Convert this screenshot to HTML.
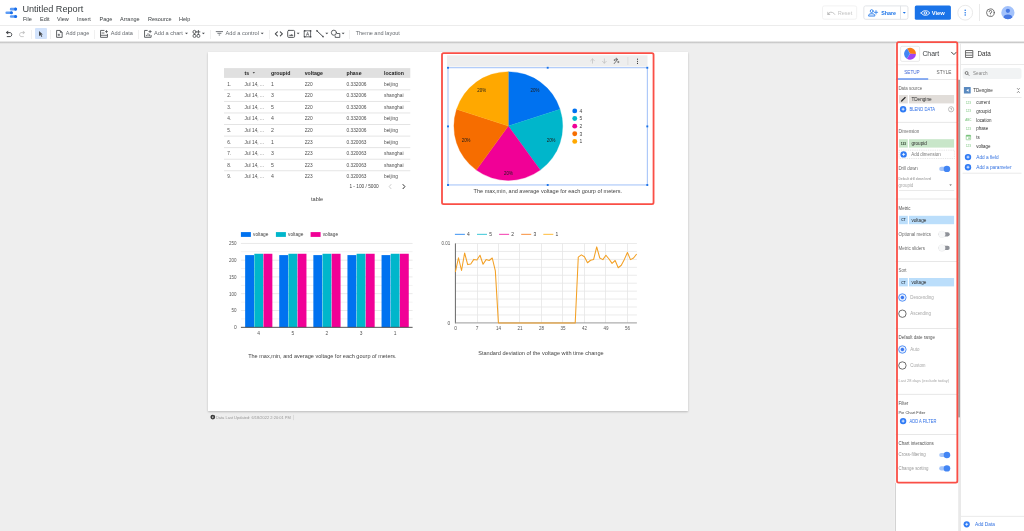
<!DOCTYPE html>
<html lang="en">
<head>
<meta charset="utf-8">
<title>Untitled Report</title>
<style>
*{box-sizing:border-box;margin:0;padding:0}
html,body{width:1024px;height:531px;overflow:hidden;background:#eeeeee;font-family:"Liberation Sans",sans-serif;color:#3c4043}
.a{position:absolute;white-space:nowrap;line-height:1}
.ov{left:0;top:0;pointer-events:none;will-change:transform}
svg text{font-family:"Liberation Sans",sans-serif}
#hdr{left:0;top:0;width:1024px;height:26px;background:#fff;border-bottom:1px solid #ececec}
#tb{left:0;top:26px;width:1024px;height:15.5px;background:#fff}
#tbsh{left:0;top:40.8px;width:1024px;height:2.9px;background:linear-gradient(#ffffff,#d2d2d2 30%,#c6c6c6 45%,#dcdcdc 70%,#eeeeee)}
.sep{top:29.5px;width:1px;height:9.3px;background:#f0f0f0}
#canvas{left:208px;top:52px;width:480px;height:359px;background:#fff;box-shadow:0 1px 2px rgba(0,0,0,.22)}
</style>
</head>
<body>
<!-- HEADER -->
<div class="a" id="hdr"></div>
<div class="a" id="tb"></div>
<div class="a" id="tbsh"></div>

<!-- CANVAS -->
<div class="a" id="canvas"></div>

<!-- toolbar separators -->
<div class="a sep" style="left:31px"></div>
<div class="a sep" style="left:49.5px"></div>
<div class="a sep" style="left:94.3px"></div>
<div class="a sep" style="left:138.3px"></div>
<div class="a sep" style="left:209.5px"></div>
<div class="a sep" style="left:269px"></div>
<div class="a sep" style="left:349.3px"></div>
<div class="a" style="left:35px;top:28px;width:11.8px;height:11.3px;background:#d2e3fc;border-radius:1px"></div>
<svg class="a" style="left:0;top:0" width="1024" height="44" viewBox="0 0 1024 44" fill="none" stroke-linecap="round" stroke-linejoin="round">
 <!-- logo -->
 <g stroke="#5c9bf5" stroke-width="2.6"><path d="M11.1 9.15H15.5M6.7 12.8H11.3M11.1 16.5H15.5"/></g>
 <g fill="#1a6ee8"><circle cx="15.6" cy="9.1" r="1.55"/><circle cx="11.4" cy="12.8" r="1.55"/><circle cx="15.6" cy="16.5" r="1.55"/></g>
 <!-- undo -->
 <g stroke="#46494d" stroke-width="1">
  <path d="M7 32.6H10.3A2.1 2.1 0 0 1 10.3 36.6H7.2"/>
 </g>
 <path d="M5.8 32.6L8.2 30.6V34.6Z" fill="#46494d"/>
 <!-- redo -->
 <g stroke="#c6c6c6" stroke-width="0.9">
  <path d="M23.8 32.6H21A2.1 2.1 0 0 0 21 36.6H23.4"/>
 </g>
 <path d="M25.2 32.6L22.9 30.7V34.5Z" fill="#c6c6c6"/>
 <!-- cursor -->
 <path d="M39 31L42.9 34.6H41.2L42.3 36.6L41.5 37L40.4 35L39 36.3Z" fill="#46494d"/>
 <!-- add page -->
 <g stroke="#46494d" stroke-width="0.85" stroke-linecap="butt" stroke-linejoin="miter">
  <path d="M56.6 30.45H60.1L62.15 32.5V37.35H56.6Z"/>
  <path d="M60.1 30.45V32.5H62.15Z" fill="#46494d" stroke-width="0.3"/>
  <path d="M58.9 33.7V36.1M57.7 34.9H60.1" stroke-width="0.75"/>
 </g>
 <!-- add data -->
 <g stroke="#46494d" stroke-width="0.85" stroke-linecap="butt" stroke-linejoin="miter">
  <path d="M104.4 30.45H100.55V37.35H107.45V33.9"/>
  <path d="M100.55 35.3H107.45M101.6 33H104.4" stroke-width="0.8"/>
  <path d="M106.5 30.1V33.1M105 31.6H108" stroke-width="0.75"/>
 </g>
 <!-- add chart -->
 <g stroke="#46494d" stroke-width="0.85" stroke-linecap="butt" stroke-linejoin="miter">
  <path d="M147.6 30.45H144.55V37.3H151.1V35"/>
  <path d="M146.4 34.9V36.2M148 33.3V36.2M149.6 34.3V36.2" stroke-width="0.8"/>
  <path d="M150.1 30V33.1M148.55 31.55H151.65" stroke-width="0.75"/>
 </g>
 <!-- community -->
 <g stroke="#46494d" stroke-width="0.85">
  <circle cx="194.5" cy="31.9" r="1.55"/>
  <rect x="193.1" y="34.4" width="2.8" height="3" rx="1.2"/>
  <rect x="197" y="34.4" width="2.8" height="3" rx="1.2"/>
  <path d="M198.4 30.4V33.4M196.9 31.9H199.9"/>
 </g>
 <!-- carets -->
 <g fill="#46494d">
  <path d="M185.0 32.65H188.0L186.5 34.25Z"/>
  <path d="M201.9 32.65H204.9L203.4 34.25Z"/>
  <path d="M260.7 32.65H263.7L262.2 34.25Z"/>
  <path d="M296.6 32.65H299.6L298.1 34.25Z"/>
  <path d="M325.3 32.65H328.3L326.8 34.25Z"/>
  <path d="M341.6 32.65H344.6L343.1 34.25Z"/>
 </g>
 <!-- filter -->
 <g stroke="#74787c" stroke-width="1" stroke-linecap="butt">
  <path d="M215.8 31.6H223M217.4 33.3H221.4M218.7 35H220.1"/>
 </g>
 <!-- code -->
 <g stroke="#46494d" stroke-width="1.05">
  <path d="M277.4 31.9L275.3 33.9L277.4 35.9M280.3 31.9L282.4 33.9L280.3 35.9"/>
 </g>
 <!-- image -->
 <g stroke="#46494d" stroke-width="0.9">
  <rect x="287.7" y="30.4" width="6.9" height="7" rx="1.1"/>
  <path d="M289.3 35.7H293.1L291.9 34.3L290.8 35.3L290.2 34.9Z" fill="#46494d" stroke-width="0.4"/>
 </g>
 <!-- text box -->
 <g stroke="#46494d" stroke-width="0.8">
  <rect x="304.6" y="30.8" width="6" height="6"/>
  <path d="M306.5 35.4L307.6 32.3L308.7 35.4M306.9 34.4H308.3" stroke-width="0.55"/>
 </g>
 <g fill="#46494d"><rect x="303.9" y="30.1" width="1.5" height="1.5"/><rect x="309.8" y="30.1" width="1.5" height="1.5"/><rect x="303.9" y="36" width="1.5" height="1.5"/><rect x="309.8" y="36" width="1.5" height="1.5"/></g>
 <!-- line -->
 <path d="M317 30.9L323 36.6" stroke="#46494d" stroke-width="1"/>
 <circle cx="317" cy="30.9" r="0.8" fill="#46494d"/><circle cx="323" cy="36.6" r="0.8" fill="#46494d"/>
 <!-- shapes -->
 <g stroke="#46494d" stroke-width="0.85">
  <circle cx="333.9" cy="32.7" r="2.55"/>
  <path d="M337.3 33.5H339.8V37.4H335.2V36"/>
 </g>
</svg>

<svg class="a" style="left:816px;top:0" width="208" height="26" viewBox="816 0 208 26" fill="none">
 <rect x="822.5" y="5.9" width="34.2" height="13.3" rx="1.8" stroke="#f0f0f0" stroke-width="0.9"/>
 <rect x="863.85" y="5.9" width="44.1" height="13.4" rx="1.8" stroke="#dfe1e5" stroke-width="0.9"/>
 <rect x="900.1" y="5.9" width="0.9" height="13.4" fill="#dfe1e5"/>
 <rect x="914.8" y="5.4" width="36.1" height="14.4" rx="1.6" fill="#1a73e8"/>
 <circle cx="965.2" cy="12.7" r="7.4" stroke="#e6e6e6" stroke-width="0.9"/>
 <rect x="979" y="4" width="0.9" height="17" fill="#e8e8e8"/>
</svg>
<svg class="a" style="left:816px;top:0" width="208" height="26" viewBox="816 0 208 26" fill="none" stroke-linecap="round" stroke-linejoin="round">
 <!-- reset icon -->
 <path d="M828.3 14.4L829.2 12.6A4.2 4.2 0 0 1 834.8 14.4" stroke="#bdbdbd" stroke-width="0.9"/>
 <path d="M827.3 11.6V14.9H830.6Z" fill="#bdbdbd"/>
 <!-- share icon -->
 <g stroke="#1a73e8" stroke-width="0.8" fill="none">
  <circle cx="871.7" cy="11.1" r="1.45"/>
  <path d="M868.6 15.7V15.2C868.6 14.1 870.6 13.6 871.7 13.6C872.8 13.6 874.8 14.1 874.8 15.2V15.7Z" fill="#d2e3fc"/>
  <path d="M876 10.6V14M874.3 12.3H877.7" stroke-width="0.75"/>
 </g>
 <path d="M902.8 12.1H905.8L904.3 13.7Z" fill="#1a73e8"/>
 <!-- eye -->
 <g stroke="#fff" stroke-width="0.85">
  <path d="M921.2 13C922.3 11.3 923.7 10.7 925.4 10.7C927.1 10.7 928.6 11.3 929.7 13C928.6 14.7 927.1 15.3 925.4 15.3C923.7 15.3 922.3 14.7 921.2 13Z"/>
  <circle cx="925.4" cy="13" r="1.25"/>
 </g>
 <!-- kebab -->
 <g fill="#1a73e8"><circle cx="965.2" cy="10.3" r="0.75"/><circle cx="965.2" cy="12.7" r="0.75"/><circle cx="965.2" cy="15.1" r="0.75"/></g>
 <!-- avatar -->
 <defs><clipPath id="avc"><circle cx="1007.9" cy="12.7" r="6.6"/></clipPath></defs>
 <circle cx="1007.9" cy="12.7" r="6.6" fill="#a3c2fb"/>
 <g clip-path="url(#avc)" fill="#4879e3"><circle cx="1007.9" cy="10.8" r="2.15"/><ellipse cx="1007.9" cy="17.3" rx="4.2" ry="2.7"/></g>
 <!-- help -->
 <circle cx="990.4" cy="12.7" r="3.85" stroke="#4a4a4a" stroke-width="0.75"/>
 <path d="M989.1 11.8A1.3 1.3 0 1 1 990.4 13V13.6" stroke="#444" stroke-width="0.75"/>
 <circle cx="990.4" cy="15" r="0.45" fill="#444"/>
</svg>

<!-- HEADER TEXT -->
<svg class="a ov" width="1024" height="531" viewBox="0 0 1024 531">
<text x="22.40" y="12.40" font-size="9.15" fill="#3c4043">Untitled Report</text>
<text x="23.00" y="21.40" font-size="5.78" fill="#3c4043" textLength="8.86" lengthAdjust="spacingAndGlyphs">File</text>
<text x="40.00" y="21.40" font-size="5.78" fill="#3c4043" textLength="9.48" lengthAdjust="spacingAndGlyphs">Edit</text>
<text x="57.00" y="21.40" font-size="5.78" fill="#3c4043" textLength="11.82" lengthAdjust="spacingAndGlyphs">View</text>
<text x="77.00" y="21.40" font-size="5.78" fill="#3c4043" textLength="13.76" lengthAdjust="spacingAndGlyphs">Insert</text>
<text x="99.50" y="21.40" font-size="5.78" fill="#3c4043" textLength="12.85" lengthAdjust="spacingAndGlyphs">Page</text>
<text x="120.00" y="21.40" font-size="5.78" fill="#3c4043" textLength="19.57" lengthAdjust="spacingAndGlyphs">Arrange</text>
<text x="148.00" y="21.40" font-size="5.78" fill="#3c4043" textLength="23.54" lengthAdjust="spacingAndGlyphs">Resource</text>
<text x="179.00" y="21.40" font-size="5.78" fill="#3c4043" textLength="11.31" lengthAdjust="spacingAndGlyphs">Help</text>
<text x="65.80" y="35.40" font-size="5.78" fill="#676b70" textLength="23.55" lengthAdjust="spacingAndGlyphs">Add page</text>
<text x="110.70" y="35.40" font-size="5.83" fill="#676b70" textLength="22.22" lengthAdjust="spacingAndGlyphs">Add data</text>
<text x="154.00" y="35.40" font-size="5.91" fill="#676b70" textLength="28.79" lengthAdjust="spacingAndGlyphs">Add a chart</text>
<text x="225.50" y="35.40" font-size="5.96" fill="#676b70" textLength="33.47" lengthAdjust="spacingAndGlyphs">Add a control</text>
<text x="355.70" y="35.40" font-size="5.79" fill="#676b70" textLength="44.11" lengthAdjust="spacingAndGlyphs">Theme and layout</text>
<text x="837.70" y="14.60" font-size="5.87" fill="#c4c4c4" textLength="14.60" lengthAdjust="spacingAndGlyphs">Reset</text>
<text x="881.20" y="14.60" font-size="5.60" fill="#1a73e8" font-weight="bold" textLength="14.81" lengthAdjust="spacingAndGlyphs">Share</text>
<text x="931.80" y="14.76" font-size="6.04" fill="#ffffff" font-weight="bold" textLength="13.00" lengthAdjust="spacingAndGlyphs">View</text>
</svg>

<!-- TABLE -->
<svg class="a ov" width="1024" height="531" viewBox="0 0 1024 531">
<rect x="224.00" y="68.10" width="186.30" height="9.80" fill="#e0e0e0"/>
<text x="244.50" y="74.91" font-size="5.62" fill="#222" font-weight="bold" textLength="4.62" lengthAdjust="spacingAndGlyphs">ts</text>
<text x="271.00" y="74.91" font-size="5.62" fill="#222" font-weight="bold" textLength="19.35" lengthAdjust="spacingAndGlyphs">groupid</text>
<text x="304.70" y="74.91" font-size="5.62" fill="#222" font-weight="bold" textLength="18.21" lengthAdjust="spacingAndGlyphs">voltage</text>
<text x="346.50" y="74.91" font-size="5.62" fill="#222" font-weight="bold" textLength="15.03" lengthAdjust="spacingAndGlyphs">phase</text>
<text x="384.00" y="74.91" font-size="5.62" fill="#222" font-weight="bold" textLength="19.93" lengthAdjust="spacingAndGlyphs">location</text>
<path d="M252.6 72.3H255L253.8 73.6Z" fill="#222"/>
<rect x="224.00" y="89.40" width="186.30" height="0.90" fill="#e2e2e2"/>
<text x="227.20" y="85.56" font-size="5.18" fill="#4e4e4e" textLength="4.00" lengthAdjust="spacingAndGlyphs">1.</text>
<text x="244.50" y="85.56" font-size="5.18" fill="#4e4e4e" textLength="19.48" lengthAdjust="spacingAndGlyphs">Jul 14, ...</text>
<text x="271.00" y="85.56" font-size="5.18" fill="#4e4e4e">1</text>
<text x="304.70" y="85.56" font-size="5.18" fill="#4e4e4e" textLength="8.01" lengthAdjust="spacingAndGlyphs">220</text>
<text x="346.50" y="85.56" font-size="5.18" fill="#4e4e4e" textLength="20.02" lengthAdjust="spacingAndGlyphs">0.332006</text>
<text x="384.00" y="85.56" font-size="5.18" fill="#4e4e4e" textLength="13.88" lengthAdjust="spacingAndGlyphs">beijing</text>
<rect x="224.00" y="100.96" width="186.30" height="0.90" fill="#e2e2e2"/>
<text x="227.20" y="97.17" font-size="5.18" fill="#4e4e4e" textLength="4.00" lengthAdjust="spacingAndGlyphs">2.</text>
<text x="244.50" y="97.17" font-size="5.18" fill="#4e4e4e" textLength="19.48" lengthAdjust="spacingAndGlyphs">Jul 14, ...</text>
<text x="271.00" y="97.17" font-size="5.18" fill="#4e4e4e">3</text>
<text x="304.70" y="97.17" font-size="5.18" fill="#4e4e4e" textLength="8.01" lengthAdjust="spacingAndGlyphs">220</text>
<text x="346.50" y="97.17" font-size="5.18" fill="#4e4e4e" textLength="20.02" lengthAdjust="spacingAndGlyphs">0.332006</text>
<text x="384.00" y="97.17" font-size="5.18" fill="#4e4e4e" textLength="19.48" lengthAdjust="spacingAndGlyphs">shanghai</text>
<rect x="224.00" y="112.52" width="186.30" height="0.90" fill="#e2e2e2"/>
<text x="227.20" y="108.78" font-size="5.18" fill="#4e4e4e" textLength="4.00" lengthAdjust="spacingAndGlyphs">3.</text>
<text x="244.50" y="108.78" font-size="5.18" fill="#4e4e4e" textLength="19.48" lengthAdjust="spacingAndGlyphs">Jul 14, ...</text>
<text x="271.00" y="108.78" font-size="5.18" fill="#4e4e4e">5</text>
<text x="304.70" y="108.78" font-size="5.18" fill="#4e4e4e" textLength="8.01" lengthAdjust="spacingAndGlyphs">220</text>
<text x="346.50" y="108.78" font-size="5.18" fill="#4e4e4e" textLength="20.02" lengthAdjust="spacingAndGlyphs">0.332006</text>
<text x="384.00" y="108.78" font-size="5.18" fill="#4e4e4e" textLength="19.48" lengthAdjust="spacingAndGlyphs">shanghai</text>
<rect x="224.00" y="124.08" width="186.30" height="0.90" fill="#e2e2e2"/>
<text x="227.20" y="120.39" font-size="5.18" fill="#4e4e4e" textLength="4.00" lengthAdjust="spacingAndGlyphs">4.</text>
<text x="244.50" y="120.39" font-size="5.18" fill="#4e4e4e" textLength="19.48" lengthAdjust="spacingAndGlyphs">Jul 14, ...</text>
<text x="271.00" y="120.39" font-size="5.18" fill="#4e4e4e">4</text>
<text x="304.70" y="120.39" font-size="5.18" fill="#4e4e4e" textLength="8.01" lengthAdjust="spacingAndGlyphs">220</text>
<text x="346.50" y="120.39" font-size="5.18" fill="#4e4e4e" textLength="20.02" lengthAdjust="spacingAndGlyphs">0.332006</text>
<text x="384.00" y="120.39" font-size="5.18" fill="#4e4e4e" textLength="13.88" lengthAdjust="spacingAndGlyphs">beijing</text>
<rect x="224.00" y="135.64" width="186.30" height="0.90" fill="#e2e2e2"/>
<text x="227.20" y="132.00" font-size="5.18" fill="#4e4e4e" textLength="4.00" lengthAdjust="spacingAndGlyphs">5.</text>
<text x="244.50" y="132.00" font-size="5.18" fill="#4e4e4e" textLength="19.48" lengthAdjust="spacingAndGlyphs">Jul 14, ...</text>
<text x="271.00" y="132.00" font-size="5.18" fill="#4e4e4e">2</text>
<text x="304.70" y="132.00" font-size="5.18" fill="#4e4e4e" textLength="8.01" lengthAdjust="spacingAndGlyphs">220</text>
<text x="346.50" y="132.00" font-size="5.18" fill="#4e4e4e" textLength="20.02" lengthAdjust="spacingAndGlyphs">0.332006</text>
<text x="384.00" y="132.00" font-size="5.18" fill="#4e4e4e" textLength="13.88" lengthAdjust="spacingAndGlyphs">beijing</text>
<rect x="224.00" y="147.20" width="186.30" height="0.90" fill="#e2e2e2"/>
<text x="227.20" y="143.61" font-size="5.18" fill="#4e4e4e" textLength="4.00" lengthAdjust="spacingAndGlyphs">6.</text>
<text x="244.50" y="143.61" font-size="5.18" fill="#4e4e4e" textLength="19.48" lengthAdjust="spacingAndGlyphs">Jul 14, ...</text>
<text x="271.00" y="143.61" font-size="5.18" fill="#4e4e4e">1</text>
<text x="304.70" y="143.61" font-size="5.18" fill="#4e4e4e" textLength="8.01" lengthAdjust="spacingAndGlyphs">223</text>
<text x="346.50" y="143.61" font-size="5.18" fill="#4e4e4e" textLength="20.02" lengthAdjust="spacingAndGlyphs">0.320063</text>
<text x="384.00" y="143.61" font-size="5.18" fill="#4e4e4e" textLength="13.88" lengthAdjust="spacingAndGlyphs">beijing</text>
<rect x="224.00" y="158.76" width="186.30" height="0.90" fill="#e2e2e2"/>
<text x="227.20" y="155.22" font-size="5.18" fill="#4e4e4e" textLength="4.00" lengthAdjust="spacingAndGlyphs">7.</text>
<text x="244.50" y="155.22" font-size="5.18" fill="#4e4e4e" textLength="19.48" lengthAdjust="spacingAndGlyphs">Jul 14, ...</text>
<text x="271.00" y="155.22" font-size="5.18" fill="#4e4e4e">3</text>
<text x="304.70" y="155.22" font-size="5.18" fill="#4e4e4e" textLength="8.01" lengthAdjust="spacingAndGlyphs">223</text>
<text x="346.50" y="155.22" font-size="5.18" fill="#4e4e4e" textLength="20.02" lengthAdjust="spacingAndGlyphs">0.320063</text>
<text x="384.00" y="155.22" font-size="5.18" fill="#4e4e4e" textLength="19.48" lengthAdjust="spacingAndGlyphs">shanghai</text>
<rect x="224.00" y="170.32" width="186.30" height="0.90" fill="#e2e2e2"/>
<text x="227.20" y="166.83" font-size="5.18" fill="#4e4e4e" textLength="4.00" lengthAdjust="spacingAndGlyphs">8.</text>
<text x="244.50" y="166.83" font-size="5.18" fill="#4e4e4e" textLength="19.48" lengthAdjust="spacingAndGlyphs">Jul 14, ...</text>
<text x="271.00" y="166.83" font-size="5.18" fill="#4e4e4e">5</text>
<text x="304.70" y="166.83" font-size="5.18" fill="#4e4e4e" textLength="8.01" lengthAdjust="spacingAndGlyphs">223</text>
<text x="346.50" y="166.83" font-size="5.18" fill="#4e4e4e" textLength="20.02" lengthAdjust="spacingAndGlyphs">0.320063</text>
<text x="384.00" y="166.83" font-size="5.18" fill="#4e4e4e" textLength="19.48" lengthAdjust="spacingAndGlyphs">shanghai</text>
<text x="227.20" y="178.44" font-size="5.18" fill="#4e4e4e" textLength="4.00" lengthAdjust="spacingAndGlyphs">9.</text>
<text x="244.50" y="178.44" font-size="5.18" fill="#4e4e4e" textLength="19.48" lengthAdjust="spacingAndGlyphs">Jul 14, ...</text>
<text x="271.00" y="178.44" font-size="5.18" fill="#4e4e4e">4</text>
<text x="304.70" y="178.44" font-size="5.18" fill="#4e4e4e" textLength="8.01" lengthAdjust="spacingAndGlyphs">223</text>
<text x="346.50" y="178.44" font-size="5.18" fill="#4e4e4e" textLength="20.02" lengthAdjust="spacingAndGlyphs">0.320063</text>
<text x="384.00" y="178.44" font-size="5.18" fill="#4e4e4e" textLength="13.88" lengthAdjust="spacingAndGlyphs">beijing</text>
<text x="349.40" y="188.34" font-size="5.13" fill="#444" textLength="29.31" lengthAdjust="spacingAndGlyphs">1 - 100 / 5000</text>
<path d="M391 184.5L389.2 186.6L391 188.7" stroke="#c2c2c2" stroke-width="0.8" fill="none" stroke-linecap="round" stroke-linejoin="round"/>
<path d="M403 184.5L404.9 186.6L403 188.7" stroke="#333" stroke-width="1" fill="none" stroke-linecap="round" stroke-linejoin="round"/>
<text x="311.00" y="200.68" font-size="6.10" fill="#444" textLength="12.25" lengthAdjust="spacingAndGlyphs">table</text>
</svg>

<!-- PIE -->
<svg class="a ov" width="1024" height="531" viewBox="0 0 1024 531">
<rect x="447.00" y="55.30" width="200.50" height="11.20" fill="#eeeeee"/>
<g stroke="#bdbdbd" stroke-width="0.7" fill="none" stroke-linecap="round" stroke-linejoin="round"><path d="M592.5 63.2V58.9M590.6 60.8L592.5 58.9L594.4 60.8"/><path d="M604.4 58.9V63.2M602.5 61.3L604.4 63.2L606.3 61.3"/></g>
<g stroke="#444" stroke-width="0.7" fill="none" stroke-linecap="round" stroke-linejoin="round"><path d="M614.2 63.6L617.6 59.4"/><path d="M616.4 58.2V60M615.5 59.1H617.3M618.3 61.3V62.7M617.6 62H619M614.6 59.6V60.6M614.1 60.1H615.1" stroke-width="0.55"/></g>
<rect x="627.50" y="57.00" width="0.80" height="8.00" fill="#d9d9d9"/>
<g fill="#333"><circle cx="637.5" cy="59.2" r="0.58"/><circle cx="637.5" cy="61.3" r="0.58"/><circle cx="637.5" cy="63.4" r="0.58"/></g>
<path d="M508.3 126.1L508.30 71.70A54.4 54.4 0 0 1 560.04 109.29Z" fill="#0072f0" stroke="#0072f0" stroke-width="0.3"/>
<path d="M508.3 126.1L560.04 109.29A54.4 54.4 0 0 1 540.28 170.11Z" fill="#00b6cb" stroke="#00b6cb" stroke-width="0.3"/>
<path d="M508.3 126.1L540.28 170.11A54.4 54.4 0 0 1 476.32 170.11Z" fill="#f10096" stroke="#f10096" stroke-width="0.3"/>
<path d="M508.3 126.1L476.32 170.11A54.4 54.4 0 0 1 456.56 109.29Z" fill="#f66d00" stroke="#f66d00" stroke-width="0.3"/>
<path d="M508.3 126.1L456.56 109.29A54.4 54.4 0 0 1 508.30 71.70Z" fill="#ffa800" stroke="#ffa800" stroke-width="0.3"/>
<text x="534.90" y="91.60" font-size="4.75" fill="#1c1c1c" text-anchor="middle" textLength="8.81" lengthAdjust="spacingAndGlyphs">20%</text>
<text x="551.10" y="141.95" font-size="4.75" fill="#1c1c1c" text-anchor="middle" textLength="8.81" lengthAdjust="spacingAndGlyphs">20%</text>
<text x="508.40" y="174.95" font-size="4.75" fill="#1c1c1c" text-anchor="middle" textLength="8.81" lengthAdjust="spacingAndGlyphs">20%</text>
<text x="466.10" y="141.95" font-size="4.75" fill="#1c1c1c" text-anchor="middle" textLength="8.81" lengthAdjust="spacingAndGlyphs">20%</text>
<text x="481.75" y="91.60" font-size="4.75" fill="#1c1c1c" text-anchor="middle" textLength="8.81" lengthAdjust="spacingAndGlyphs">20%</text>
<circle cx="574.75" cy="110.90" r="2.45" fill="#0072f0"/>
<text x="579.40" y="112.68" font-size="4.97" fill="#444">4</text>
<circle cx="574.75" cy="118.52" r="2.45" fill="#00b6cb"/>
<text x="579.40" y="120.30" font-size="4.97" fill="#444">5</text>
<circle cx="574.75" cy="126.14" r="2.45" fill="#f10096"/>
<text x="579.40" y="127.92" font-size="4.97" fill="#444">2</text>
<circle cx="574.75" cy="133.76" r="2.45" fill="#f66d00"/>
<text x="579.40" y="135.54" font-size="4.97" fill="#444">3</text>
<circle cx="574.75" cy="141.38" r="2.45" fill="#ffa800"/>
<text x="579.40" y="143.16" font-size="4.97" fill="#444">1</text>
<rect x="448" y="67.75" width="199.3" height="117.2" fill="none" stroke="#94b8f7" stroke-width="0.9"/>
<rect x="447.05" y="66.80" width="1.90" height="1.90" fill="#1a73e8"/>
<rect x="546.75" y="66.80" width="1.90" height="1.90" fill="#1a73e8"/>
<rect x="646.35" y="66.80" width="1.90" height="1.90" fill="#1a73e8"/>
<rect x="447.05" y="125.45" width="1.90" height="1.90" fill="#1a73e8"/>
<rect x="646.35" y="125.45" width="1.90" height="1.90" fill="#1a73e8"/>
<rect x="447.05" y="184.05" width="1.90" height="1.90" fill="#1a73e8"/>
<rect x="546.75" y="184.05" width="1.90" height="1.90" fill="#1a73e8"/>
<rect x="646.35" y="184.05" width="1.90" height="1.90" fill="#1a73e8"/>
<text x="547.80" y="193.14" font-size="5.97" fill="#444" text-anchor="middle" textLength="148.47" lengthAdjust="spacingAndGlyphs">The max,min, and average voltage for each gourp of meters.</text>
<rect x="442" y="53.05" width="211.55" height="151" rx="1.6" fill="none" stroke="#fa4f46" stroke-width="1.8"/>
</svg>

<!-- BAR -->
<svg class="a ov" width="1024" height="531" viewBox="0 0 1024 531">
<rect x="240.90" y="232.10" width="10.00" height="4.80" fill="#0072f0"/>
<text x="253.00" y="236.35" font-size="5.16" fill="#444" textLength="15.41" lengthAdjust="spacingAndGlyphs">voltage</text>
<rect x="275.90" y="232.10" width="10.00" height="4.80" fill="#00b6cb"/>
<text x="288.00" y="236.35" font-size="5.16" fill="#444" textLength="15.41" lengthAdjust="spacingAndGlyphs">voltage</text>
<rect x="310.60" y="232.10" width="10.00" height="4.80" fill="#f10096"/>
<text x="322.70" y="236.35" font-size="5.16" fill="#444" textLength="15.41" lengthAdjust="spacingAndGlyphs">voltage</text>
<rect x="240.90" y="318.51" width="171.70" height="0.80" fill="#efefef"/>
<rect x="240.90" y="310.11" width="171.70" height="0.80" fill="#e4e4e4"/>
<rect x="240.90" y="301.72" width="171.70" height="0.80" fill="#efefef"/>
<rect x="240.90" y="293.32" width="171.70" height="0.80" fill="#e4e4e4"/>
<rect x="240.90" y="284.93" width="171.70" height="0.80" fill="#efefef"/>
<rect x="240.90" y="276.53" width="171.70" height="0.80" fill="#e4e4e4"/>
<rect x="240.90" y="268.14" width="171.70" height="0.80" fill="#efefef"/>
<rect x="240.90" y="259.74" width="171.70" height="0.80" fill="#e4e4e4"/>
<rect x="240.90" y="251.34" width="171.70" height="0.80" fill="#efefef"/>
<rect x="240.90" y="242.95" width="171.70" height="0.80" fill="#e4e4e4"/>
<text x="236.60" y="329.24" font-size="4.86" fill="#555" text-anchor="end">0</text>
<text x="236.60" y="312.45" font-size="4.86" fill="#555" text-anchor="end" textLength="5.01" lengthAdjust="spacingAndGlyphs">50</text>
<text x="236.60" y="295.66" font-size="4.86" fill="#555" text-anchor="end" textLength="7.51" lengthAdjust="spacingAndGlyphs">100</text>
<text x="236.60" y="278.87" font-size="4.86" fill="#555" text-anchor="end" textLength="7.51" lengthAdjust="spacingAndGlyphs">150</text>
<text x="236.60" y="262.08" font-size="4.86" fill="#555" text-anchor="end" textLength="7.51" lengthAdjust="spacingAndGlyphs">200</text>
<text x="236.60" y="245.29" font-size="4.86" fill="#555" text-anchor="end" textLength="7.51" lengthAdjust="spacingAndGlyphs">250</text>
<rect x="245.15" y="255.10" width="8.87" height="72.20" fill="#0072f0"/>
<rect x="254.32" y="253.76" width="8.87" height="73.54" fill="#00b6cb"/>
<rect x="263.49" y="253.76" width="8.87" height="73.54" fill="#f10096"/>
<text x="258.70" y="334.64" font-size="4.86" fill="#555" text-anchor="middle">4</text>
<rect x="279.25" y="255.10" width="8.87" height="72.20" fill="#0072f0"/>
<rect x="288.42" y="253.76" width="8.87" height="73.54" fill="#00b6cb"/>
<rect x="297.59" y="253.76" width="8.87" height="73.54" fill="#f10096"/>
<text x="292.80" y="334.64" font-size="4.86" fill="#555" text-anchor="middle">5</text>
<rect x="313.35" y="255.10" width="8.87" height="72.20" fill="#0072f0"/>
<rect x="322.52" y="253.76" width="8.87" height="73.54" fill="#00b6cb"/>
<rect x="331.69" y="253.76" width="8.87" height="73.54" fill="#f10096"/>
<text x="326.90" y="334.64" font-size="4.86" fill="#555" text-anchor="middle">2</text>
<rect x="347.45" y="255.10" width="8.87" height="72.20" fill="#0072f0"/>
<rect x="356.62" y="253.76" width="8.87" height="73.54" fill="#00b6cb"/>
<rect x="365.79" y="253.76" width="8.87" height="73.54" fill="#f10096"/>
<text x="361.00" y="334.64" font-size="4.86" fill="#555" text-anchor="middle">3</text>
<rect x="381.55" y="255.10" width="8.87" height="72.20" fill="#0072f0"/>
<rect x="390.72" y="253.76" width="8.87" height="73.54" fill="#00b6cb"/>
<rect x="399.89" y="253.76" width="8.87" height="73.54" fill="#f10096"/>
<text x="395.10" y="334.64" font-size="4.86" fill="#555" text-anchor="middle">1</text>
<rect x="240.90" y="326.85" width="171.70" height="0.90" fill="#444"/>
<text x="322.40" y="357.84" font-size="5.97" fill="#444" text-anchor="middle" textLength="148.47" lengthAdjust="spacingAndGlyphs">The max,min, and average voltage for each gourp of meters.</text>
</svg>

<!-- LINE -->
<svg class="a ov" width="1024" height="531" viewBox="0 0 1024 531">
<rect x="454.90" y="233.85" width="10.00" height="0.90" fill="#0072f0" opacity="0.85"/>
<text x="467.10" y="236.18" font-size="4.97" fill="#444">4</text>
<rect x="477.00" y="233.85" width="10.00" height="0.90" fill="#00b6cb" opacity="0.85"/>
<text x="489.20" y="236.18" font-size="4.97" fill="#444">5</text>
<rect x="499.10" y="233.85" width="10.00" height="0.90" fill="#f10096" opacity="0.85"/>
<text x="511.30" y="236.18" font-size="4.97" fill="#444">2</text>
<rect x="521.20" y="233.85" width="10.00" height="0.90" fill="#f66d00" opacity="0.85"/>
<text x="533.40" y="236.18" font-size="4.97" fill="#444">3</text>
<rect x="543.30" y="233.85" width="10.00" height="0.90" fill="#ffa800" opacity="0.85"/>
<text x="555.50" y="236.18" font-size="4.97" fill="#444">1</text>
<rect x="455.40" y="314.55" width="181.50" height="0.80" fill="#e6e6e6"/>
<rect x="455.40" y="306.60" width="181.50" height="0.80" fill="#e6e6e6"/>
<rect x="455.40" y="298.65" width="181.50" height="0.80" fill="#e6e6e6"/>
<rect x="455.40" y="290.70" width="181.50" height="0.80" fill="#e6e6e6"/>
<rect x="455.40" y="282.75" width="181.50" height="0.80" fill="#e6e6e6"/>
<rect x="455.40" y="274.80" width="181.50" height="0.80" fill="#e6e6e6"/>
<rect x="455.40" y="266.85" width="181.50" height="0.80" fill="#e6e6e6"/>
<rect x="455.40" y="258.90" width="181.50" height="0.80" fill="#e6e6e6"/>
<rect x="455.40" y="250.95" width="181.50" height="0.80" fill="#e6e6e6"/>
<rect x="455.40" y="243.00" width="181.50" height="0.80" fill="#e6e6e6"/>
<rect x="477.10" y="243.40" width="0.80" height="79.50" fill="#e6e6e6"/>
<rect x="498.20" y="243.40" width="0.80" height="79.50" fill="#e6e6e6"/>
<rect x="519.20" y="243.40" width="0.80" height="79.50" fill="#e6e6e6"/>
<rect x="541.00" y="243.40" width="0.80" height="79.50" fill="#e6e6e6"/>
<rect x="562.20" y="243.40" width="0.80" height="79.50" fill="#e6e6e6"/>
<rect x="584.00" y="243.40" width="0.80" height="79.50" fill="#e6e6e6"/>
<rect x="605.20" y="243.40" width="0.80" height="79.50" fill="#e6e6e6"/>
<rect x="627.10" y="243.40" width="0.80" height="79.50" fill="#e6e6e6"/>
<rect x="454.90" y="243.40" width="1.00" height="80.00" fill="#686868"/>
<rect x="455.40" y="322.40" width="181.50" height="1.00" fill="#9a9a9a"/>
<polyline points="455.40,271.90 458.47,257.75 461.54,270.50 464.62,253.00 467.69,264.60 470.76,264.00 473.83,259.40 476.90,260.00 479.98,255.25 483.05,264.25 486.12,259.60 489.19,260.50 492.26,258.00 495.34,270.90 498.41,322.90 501.48,322.90 504.55,322.90 507.62,322.90 510.70,322.90 513.77,322.90 516.84,322.90 519.91,322.90 522.98,322.90 526.06,322.90 529.13,322.90 532.20,322.90 535.27,322.90 538.34,322.90 541.42,322.90 544.49,322.90 547.56,322.90 550.63,322.90 553.70,322.90 556.78,322.90 559.85,322.90 562.92,322.90 565.99,322.90 569.06,322.90 572.14,322.90 575.21,322.90 578.28,257.10 581.35,254.90 584.42,256.75 587.50,262.75 590.57,260.25 593.64,259.40 596.71,246.90 599.78,258.00 602.86,259.60 605.93,255.25 609.00,259.00 612.07,263.40 615.14,260.50 618.22,267.75 621.29,265.25 624.36,259.40 627.43,252.50 630.50,259.60 633.58,258.00 636.65,254.00" fill="none" stroke="#f3a024" stroke-width="1.05" stroke-linejoin="round"/>
<text x="455.50" y="330.14" font-size="4.86" fill="#555" text-anchor="middle">0</text>
<text x="477.00" y="330.14" font-size="4.86" fill="#555" text-anchor="middle">7</text>
<text x="498.51" y="330.14" font-size="4.86" fill="#555" text-anchor="middle" textLength="5.01" lengthAdjust="spacingAndGlyphs">14</text>
<text x="520.01" y="330.14" font-size="4.86" fill="#555" text-anchor="middle" textLength="5.01" lengthAdjust="spacingAndGlyphs">21</text>
<text x="541.52" y="330.14" font-size="4.86" fill="#555" text-anchor="middle" textLength="5.01" lengthAdjust="spacingAndGlyphs">28</text>
<text x="563.02" y="330.14" font-size="4.86" fill="#555" text-anchor="middle" textLength="5.01" lengthAdjust="spacingAndGlyphs">35</text>
<text x="584.52" y="330.14" font-size="4.86" fill="#555" text-anchor="middle" textLength="5.01" lengthAdjust="spacingAndGlyphs">42</text>
<text x="606.03" y="330.14" font-size="4.86" fill="#555" text-anchor="middle" textLength="5.01" lengthAdjust="spacingAndGlyphs">49</text>
<text x="627.53" y="330.14" font-size="4.86" fill="#555" text-anchor="middle" textLength="5.01" lengthAdjust="spacingAndGlyphs">56</text>
<text x="450.30" y="245.44" font-size="4.86" fill="#555" text-anchor="end" textLength="8.76" lengthAdjust="spacingAndGlyphs">0.01</text>
<text x="450.30" y="324.64" font-size="4.86" fill="#555" text-anchor="end">0</text>
<text x="540.90" y="354.67" font-size="6.05" fill="#444" text-anchor="middle" textLength="125.46" lengthAdjust="spacingAndGlyphs">Standard deviation of the voltage with time change</text>
<circle cx="212.8" cy="417.1" r="2.4" fill="#3a3a3a"/><path d="M213.3 415.5L211.9 417.4H212.8L212.4 418.8L213.8 416.8H212.9Z" fill="#fff"/>
<text x="215.90" y="419.15" font-size="4.32" fill="#989898" textLength="74.94" lengthAdjust="spacingAndGlyphs">Data Last Updated: 6/18/2022 2:20:01 PM</text>
<rect x="293.30" y="414.90" width="0.60" height="5.20" fill="#cfcfcf"/>
</svg>

<!-- CHART PANEL -->
<svg class="a ov" width="1024" height="531" viewBox="0 0 1024 531">
<rect x="894.60" y="43.50" width="66.00" height="488.00" fill="#f3f3f3"/>
<rect x="895.80" y="43.50" width="64.50" height="488.00" fill="#ffffff"/>
<rect x="895.20" y="483.00" width="0.70" height="48.00" fill="#c4c4c4"/>
<rect x="958.20" y="79.80" width="2.30" height="451.20" fill="#e9e9e9"/>
<rect x="958.20" y="79.80" width="1.80" height="337.60" fill="#a0a0a0"/>
<rect x="900.6" y="46.3" width="19" height="15.1" rx="1.5" fill="#fff" stroke="#e4e4e4" stroke-width="0.8"/>
<path d="M910 53.8L907.23 48.59A5.9 5.9 0 0 1 915.90 54.01Z" fill="#fa7b17"/>
<path d="M910 53.8L915.90 54.01A5.9 5.9 0 0 1 906.87 58.80Z" fill="#a142f4"/>
<path d="M910 53.8L906.87 58.80A5.9 5.9 0 0 1 907.23 48.59Z" fill="#4285f4"/>
<text x="922.40" y="56.46" font-size="7.42" fill="#3c4043" textLength="16.80" lengthAdjust="spacingAndGlyphs">Chart</text>
<path d="M951.5 52.2L953.9 54.6L956.3 52.2" stroke="#444" stroke-width="1" fill="none" stroke-linecap="round" stroke-linejoin="round"/>
<rect x="895.60" y="64.40" width="63.00" height="0.80" fill="#e4e4e4"/>
<text x="904.20" y="73.95" font-size="5.44" fill="#3f66d6" textLength="15.50" lengthAdjust="spacingAndGlyphs">SETUP</text>
<text x="936.60" y="73.97" font-size="5.50" fill="#5f5f5f" textLength="14.89" lengthAdjust="spacingAndGlyphs">STYLE</text>
<rect x="895.60" y="79.20" width="63.00" height="0.70" fill="#e0e0e0"/>
<rect x="896.50" y="78.30" width="31.70" height="1.40" fill="#5c8df0"/>
<text x="898.40" y="89.96" font-size="4.77" fill="#6b6b6b" textLength="23.83" lengthAdjust="spacingAndGlyphs">Data source</text>
<rect x="899.00" y="95.00" width="8.80" height="8.40" fill="#e1ddd9"/>
<rect x="909.00" y="95.00" width="45.10" height="8.40" fill="#e1ddd9"/>
<text x="911.40" y="101.15" font-size="5.02" fill="#2a2a2a" textLength="20.16" lengthAdjust="spacingAndGlyphs">TDengine</text>
<path d="M900.9 101.70L901.2 100.50L905 96.70L905.9 97.60L902.1 101.40Z" fill="#222"/>
<circle cx="903.1" cy="109.2" r="3.2" fill="#2f7bf5"/>
<path d="M901.6 109.2H904.6M903.1 107.7V110.7" stroke="#fff" stroke-width="0.8"/>
<text x="909.50" y="111.19" font-size="4.99" fill="#2f6fe6" textLength="25.50" lengthAdjust="spacingAndGlyphs">BLEND DATA</text>
<circle cx="951.1" cy="109.3" r="2.6" fill="none" stroke="#8a8a8a" stroke-width="0.55"/>
<text x="951.10" y="110.79" font-size="3.89" fill="#777" text-anchor="middle">?</text>
<rect x="895.60" y="121.90" width="62.60" height="0.80" fill="#e2e2e2"/>
<text x="898.40" y="133.31" font-size="4.77" fill="#6b6b6b" textLength="20.88" lengthAdjust="spacingAndGlyphs">Dimension</text>
<rect x="899.00" y="139.20" width="8.80" height="8.40" fill="#c8e6c9"/>
<rect x="909.00" y="139.20" width="45.10" height="8.40" fill="#c8e6c9"/>
<text x="911.40" y="145.35" font-size="5.02" fill="#2a2a2a" textLength="15.51" lengthAdjust="spacingAndGlyphs">groupid</text>
<text x="903.40" y="144.78" font-size="3.56" fill="#2c3e2c" text-anchor="middle" font-weight="bold" textLength="5.51" lengthAdjust="spacingAndGlyphs">123</text>
<rect x="899.2" y="150.2" width="55.2" height="8.3" fill="#fff" stroke="#c8c8c8" stroke-width="0.5" stroke-dasharray="0.9 0.9"/>
<circle cx="903.6" cy="154.4" r="3.2" fill="#2f7bf5"/>
<path d="M902.1 154.4H905.1M903.6 152.9V155.9" stroke="#fff" stroke-width="0.8"/>
<text x="911.20" y="156.02" font-size="4.81" fill="#777" textLength="29.44" lengthAdjust="spacingAndGlyphs">Add dimension</text>
<text x="898.40" y="170.41" font-size="4.77" fill="#6b6b6b" textLength="19.41" lengthAdjust="spacingAndGlyphs">Drill down</text>
<rect x="939.20" y="166.85" width="11.30" height="4.10" fill="#a5c5fa" rx="2.05"/>
<circle cx="946.9" cy="168.9" r="3.2" fill="#4285f4"/>
<text x="898.50" y="180.07" font-size="3.54" fill="#8a8a8a" textLength="32.82" lengthAdjust="spacingAndGlyphs">Default drill down level</text>
<text x="898.50" y="186.72" font-size="4.81" fill="#a8a8a8" textLength="14.85" lengthAdjust="spacingAndGlyphs">groupid</text>
<path d="M949.3 184.4H951.9L950.6 185.8Z" fill="#555"/>
<rect x="899.00" y="190.30" width="55.20" height="0.60" fill="#dcdcdc"/>
<rect x="895.60" y="198.60" width="62.60" height="0.80" fill="#e2e2e2"/>
<text x="898.50" y="209.91" font-size="4.77" fill="#555" textLength="12.03" lengthAdjust="spacingAndGlyphs">Metric</text>
<rect x="899.00" y="215.80" width="8.80" height="8.40" fill="#bbdefb"/>
<rect x="909.00" y="215.80" width="45.10" height="8.40" fill="#bbdefb"/>
<text x="911.40" y="221.95" font-size="5.02" fill="#2a2a2a" textLength="14.99" lengthAdjust="spacingAndGlyphs">voltage</text>
<text x="903.40" y="221.38" font-size="3.56" fill="#2a3a4a" text-anchor="middle" font-weight="bold" textLength="4.40" lengthAdjust="spacingAndGlyphs">CT</text>
<text x="898.50" y="235.74" font-size="4.86" fill="#6b6b6b" textLength="32.51" lengthAdjust="spacingAndGlyphs">Optional metrics</text>
<rect x="938.60" y="232.20" width="11.10" height="4.20" fill="#8e9198" rx="2.1"/>
<circle cx="941.9" cy="234.3" r="3.5" fill="#e9e9ea"/>
<circle cx="941.9" cy="234.20000000000002" r="3.15" fill="#f7f8f9"/>
<text x="898.50" y="249.54" font-size="4.86" fill="#6b6b6b" textLength="26.50" lengthAdjust="spacingAndGlyphs">Metric sliders</text>
<rect x="938.60" y="245.80" width="11.10" height="4.20" fill="#8e9198" rx="2.1"/>
<circle cx="941.9" cy="247.9" r="3.5" fill="#e9e9ea"/>
<circle cx="941.9" cy="247.8" r="3.15" fill="#f7f8f9"/>
<rect x="895.60" y="261.00" width="62.60" height="0.80" fill="#e2e2e2"/>
<text x="898.50" y="272.21" font-size="4.77" fill="#6b6b6b" textLength="8.11" lengthAdjust="spacingAndGlyphs">Sort</text>
<rect x="899.00" y="278.00" width="8.80" height="8.40" fill="#bbdefb"/>
<rect x="909.00" y="278.00" width="45.10" height="8.40" fill="#bbdefb"/>
<text x="911.40" y="284.15" font-size="5.02" fill="#2a2a2a" textLength="14.99" lengthAdjust="spacingAndGlyphs">voltage</text>
<text x="903.40" y="283.58" font-size="3.56" fill="#2a3a4a" text-anchor="middle" font-weight="bold" textLength="4.40" lengthAdjust="spacingAndGlyphs">CT</text>
<circle cx="902.4" cy="297.5" r="3.75" fill="#e3edfd" stroke="#4285f4" stroke-width="0.85"/>
<circle cx="902.4" cy="297.5" r="1.7" fill="#3b78f0"/>
<text x="910.30" y="299.31" font-size="4.77" fill="#a6a6a6" textLength="23.34" lengthAdjust="spacingAndGlyphs">Descending</text>
<circle cx="902.4" cy="313.7" r="3.7" fill="#fff" stroke="#555" stroke-width="0.85"/>
<text x="910.30" y="315.41" font-size="4.77" fill="#a6a6a6" textLength="20.64" lengthAdjust="spacingAndGlyphs">Ascending</text>
<rect x="895.60" y="328.20" width="62.60" height="0.80" fill="#e2e2e2"/>
<text x="898.50" y="339.12" font-size="4.80" fill="#555" textLength="36.53" lengthAdjust="spacingAndGlyphs">Default date range</text>
<circle cx="902.4" cy="349.5" r="3.75" fill="#e3edfd" stroke="#4285f4" stroke-width="0.85"/>
<circle cx="902.4" cy="349.5" r="1.7" fill="#3b78f0"/>
<text x="910.30" y="351.21" font-size="4.77" fill="#a6a6a6" textLength="9.09" lengthAdjust="spacingAndGlyphs">Auto</text>
<circle cx="902.4" cy="365.5" r="3.7" fill="#fff" stroke="#555" stroke-width="0.85"/>
<text x="910.30" y="367.21" font-size="4.77" fill="#a6a6a6" textLength="15.23" lengthAdjust="spacingAndGlyphs">Custom</text>
<text x="898.50" y="382.33" font-size="4.27" fill="#a6a6a6" textLength="50.50" lengthAdjust="spacingAndGlyphs">Last 28 days (exclude today)</text>
<rect x="895.60" y="393.90" width="62.60" height="0.80" fill="#e2e2e2"/>
<text x="898.50" y="404.91" font-size="4.77" fill="#555" textLength="9.82" lengthAdjust="spacingAndGlyphs">Filter</text>
<text x="898.50" y="413.85" font-size="4.34" fill="#444" textLength="26.81" lengthAdjust="spacingAndGlyphs">Pie Chart Filter</text>
<circle cx="903.1" cy="421.1" r="3.2" fill="#2f7bf5"/>
<path d="M901.6 421.1H904.6M903.1 419.6V422.6" stroke="#fff" stroke-width="0.8"/>
<text x="909.50" y="423.05" font-size="4.90" fill="#2f6fe6" textLength="26.90" lengthAdjust="spacingAndGlyphs">ADD A FILTER</text>
<rect x="895.60" y="434.20" width="62.60" height="0.80" fill="#e2e2e2"/>
<text x="898.50" y="445.04" font-size="4.86" fill="#555" textLength="35.27" lengthAdjust="spacingAndGlyphs">Chart interactions</text>
<text x="898.50" y="456.40" font-size="4.75" fill="#999" textLength="27.14" lengthAdjust="spacingAndGlyphs">Cross-filtering</text>
<rect x="939.20" y="452.95" width="11.30" height="4.10" fill="#a5c5fa" rx="2.05"/>
<circle cx="946.9" cy="455" r="3.2" fill="#4285f4"/>
<text x="898.50" y="469.90" font-size="4.75" fill="#999" textLength="29.84" lengthAdjust="spacingAndGlyphs">Change sorting</text>
<rect x="939.20" y="466.35" width="11.30" height="4.10" fill="#a5c5fa" rx="2.05"/>
<circle cx="946.9" cy="468.4" r="3.2" fill="#4285f4"/>
<rect x="897" y="42.05" width="60.35" height="440.6" rx="1.6" fill="none" stroke="#fa4f46" stroke-width="1.8"/>
</svg>

<!-- DATA PANEL -->
<svg class="a ov" width="1024" height="531" viewBox="0 0 1024 531">
<rect x="960.10" y="43.50" width="64.00" height="488.00" fill="#ffffff"/>
<rect x="960.10" y="43.50" width="0.70" height="488.00" fill="#e0e0e0"/>
<g fill="none" stroke="#707070" stroke-width="1.05"><rect x="965.5" y="50.5" width="7.3" height="7" rx="0.5"/><path d="M965.4 52.8H972.8M965.4 55.2H972.8"/></g>
<text x="977.50" y="56.24" font-size="6.80" fill="#333" textLength="13.31" lengthAdjust="spacingAndGlyphs">Data</text>
<rect x="960.80" y="64.00" width="63.20" height="0.80" fill="#e6e6e6"/>
<rect x="962.60" y="68.00" width="58.90" height="11.00" fill="#f1f3f4" rx="2.5"/>
<circle cx="966.6" cy="73" r="1.45" fill="none" stroke="#4a4a4a" stroke-width="0.7"/><path d="M967.7 74.1L969.2 75.6" stroke="#4a4a4a" stroke-width="0.7"/>
<text x="973.00" y="75.18" font-size="4.97" fill="#888" textLength="14.58" lengthAdjust="spacingAndGlyphs">Search</text>
<rect x="963.90" y="86.90" width="6.80" height="6.70" fill="#5a8ac0" rx="0.4"/>
<path d="M968.6 88.9V91.7L966.3 90.3Z" fill="#fff"/>
<text x="973.20" y="91.54" font-size="4.86" fill="#333" textLength="19.51" lengthAdjust="spacingAndGlyphs">TDengine</text>
<path d="M1017.1 88.2L1018.4 89.6L1019.7 88.2M1017.1 92.8L1018.4 91.4L1019.7 92.8" stroke="#444" stroke-width="0.6" fill="none"/>
<rect x="962.60" y="97.10" width="58.90" height="0.70" fill="#e2e2e2"/>
<text x="968.40" y="103.66" font-size="3.24" fill="#6fbf73" text-anchor="middle" textLength="5.01" lengthAdjust="spacingAndGlyphs">123</text>
<text x="976.20" y="104.22" font-size="4.81" fill="#333" textLength="13.85" lengthAdjust="spacingAndGlyphs">current</text>
<text x="968.40" y="112.41" font-size="3.24" fill="#6fbf73" text-anchor="middle" textLength="5.01" lengthAdjust="spacingAndGlyphs">123</text>
<text x="976.20" y="112.97" font-size="4.81" fill="#333" textLength="14.85" lengthAdjust="spacingAndGlyphs">groupid</text>
<text x="968.40" y="121.16" font-size="3.24" fill="#6fbf73" text-anchor="middle" textLength="6.17" lengthAdjust="spacingAndGlyphs">ABC</text>
<text x="976.20" y="121.72" font-size="4.81" fill="#333" textLength="15.34" lengthAdjust="spacingAndGlyphs">location</text>
<text x="968.40" y="129.91" font-size="3.24" fill="#6fbf73" text-anchor="middle" textLength="5.01" lengthAdjust="spacingAndGlyphs">123</text>
<text x="976.20" y="130.47" font-size="4.81" fill="#333" textLength="12.12" lengthAdjust="spacingAndGlyphs">phase</text>
<rect x="966.2" y="135.20" width="4.4" height="4.6" rx="0.5" fill="none" stroke="#66bb6a" stroke-width="0.55"/><rect x="966.2" y="135.20" width="4.4" height="1.3" fill="#66bb6a"/><rect x="968.4" y="137.50" width="1.3" height="1.3" fill="#66bb6a"/>
<text x="976.20" y="139.22" font-size="4.81" fill="#333" textLength="3.46" lengthAdjust="spacingAndGlyphs">ts</text>
<text x="968.40" y="147.41" font-size="3.24" fill="#6fbf73" text-anchor="middle" textLength="5.01" lengthAdjust="spacingAndGlyphs">123</text>
<text x="976.20" y="147.97" font-size="4.81" fill="#333" textLength="14.35" lengthAdjust="spacingAndGlyphs">voltage</text>
<circle cx="968" cy="157.1" r="3.2" fill="#2f7bf5"/>
<path d="M966.5 157.1H969.5M968 155.6V158.6" stroke="#fff" stroke-width="0.8"/>
<text x="976.30" y="159.02" font-size="5.10" fill="#2f6fe0" textLength="22.31" lengthAdjust="spacingAndGlyphs">Add a field</text>
<circle cx="968" cy="167.2" r="3.2" fill="#2f7bf5"/>
<path d="M966.5 167.2H969.5M968 165.7V168.7" stroke="#fff" stroke-width="0.8"/>
<text x="976.30" y="169.12" font-size="5.10" fill="#2f6fe0" textLength="35.16" lengthAdjust="spacingAndGlyphs">Add a parameter</text>
<rect x="962.60" y="172.80" width="58.90" height="0.70" fill="#e2e2e2"/>
<rect x="960.80" y="515.90" width="63.20" height="0.70" fill="#e2e2e2"/>
<circle cx="966.7" cy="524.3" r="3.1" fill="#2f7bf5"/>
<path d="M965.2 524.3H968.2M966.7 522.8V525.8" stroke="#fff" stroke-width="0.8"/>
<text x="975.00" y="526.14" font-size="5.15" fill="#2f6fe0" textLength="19.89" lengthAdjust="spacingAndGlyphs">Add Data</text>
</svg>

</body>
</html>
